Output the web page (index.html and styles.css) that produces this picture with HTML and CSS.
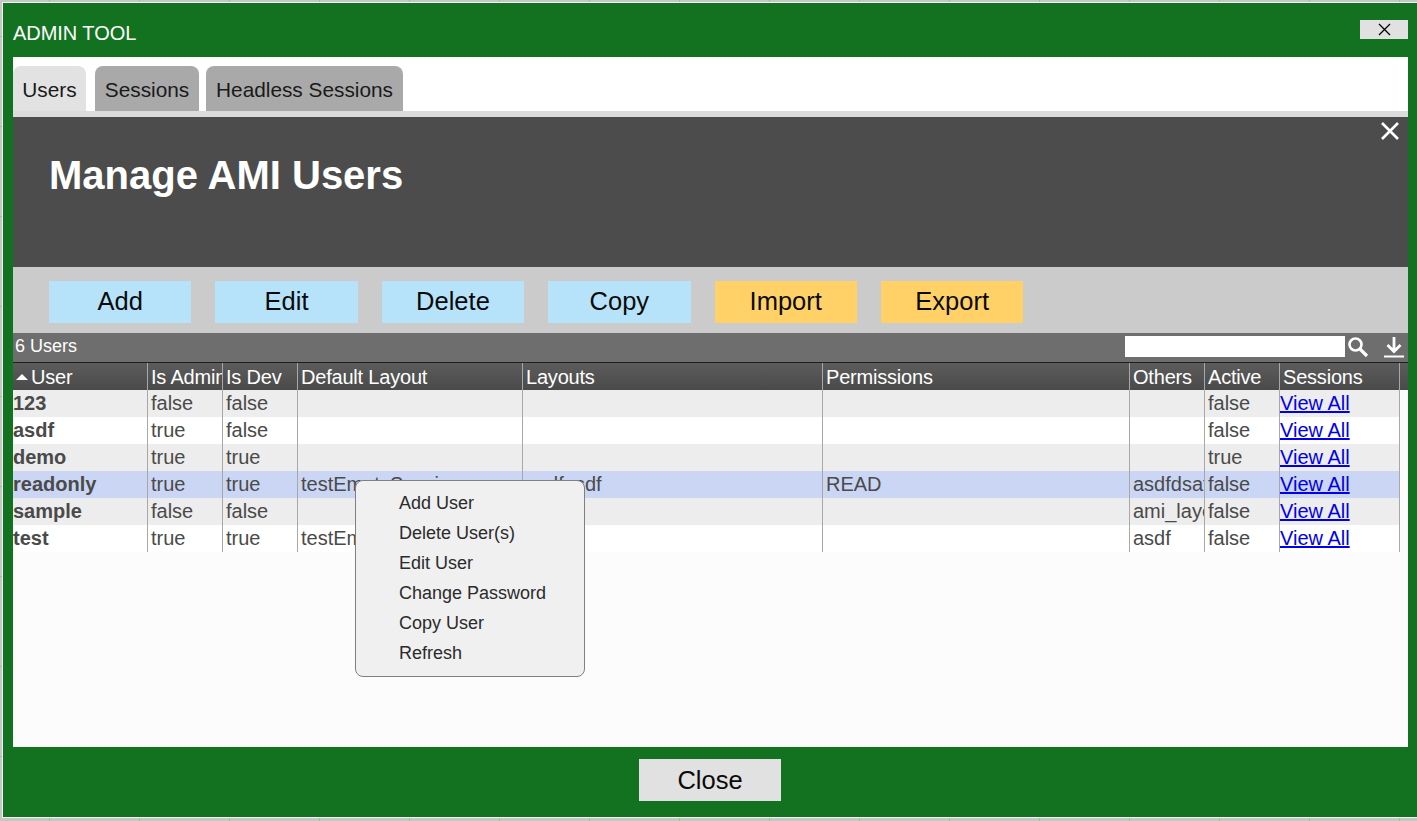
FILE: index.html
```html
<!DOCTYPE html>
<html lang="en">
<head>
<meta charset="utf-8">
<title>Admin Tool</title>
<link rel="stylesheet" href="styles.css">
</head>
<body>
<div class="window">
  <header class="titlebar">
    <span class="title">ADMIN TOOL</span>
    <button class="win-close" aria-label="Close window">
      <svg width="13" height="13" viewBox="0 0 13 13"><path d="M1 1L12 12M12 1L1 12" stroke="#000" stroke-width="1.3" fill="none"/></svg>
    </button>
  </header>
  <div class="content">
    <nav class="tabs">
      <div class="tab tab-active">Users</div>
      <div class="tab">Sessions</div>
      <div class="tab">Headless Sessions</div>
    </nav>
    <div class="tab-rule"></div>
    <section class="banner">
      <h1>Manage AMI Users</h1>
      <svg class="banner-close" width="20" height="20" viewBox="0 0 20 20"><path d="M2 2L18 18M18 2L2 18" stroke="#fff" stroke-width="2.6" fill="none"/></svg>
    </section>
    <div class="toolbar">
      <div class="btn btn-blue">Add</div>
      <div class="btn btn-blue">Edit</div>
      <div class="btn btn-blue">Delete</div>
      <div class="btn btn-blue">Copy</div>
      <div class="btn btn-orange">Import</div>
      <div class="btn btn-orange">Export</div>
    </div>
    <div class="countbar">
      <span class="count">6 Users</span>
      <div class="search"></div>
      <svg class="icon-search" width="22" height="22" viewBox="0 0 22 22"><circle cx="8.500" cy="8.500" r="6" stroke="#fff" stroke-width="2.600" fill="none"/><path d="M13 13L20 20" stroke="#fff" stroke-width="3.200" fill="none"/></svg>
      <svg class="icon-download" width="20" height="22" viewBox="0 0 20 22"><path d="M10 1V15M3.500 9L10 15.500L16.500 9" stroke="#fff" stroke-width="2.800" fill="none"/><path d="M0 20.500H20" stroke="#fff" stroke-width="2" fill="none"/></svg>
    </div>
    <div class="table">
      <div class="row head">
        <div class="cell c1"><span class="sort"></span>User</div>
        <div class="cell c2">Is Admin</div>
        <div class="cell c3">Is Dev</div>
        <div class="cell c4">Default Layout</div>
        <div class="cell c5">Layouts</div>
        <div class="cell c6">Permissions</div>
        <div class="cell c7">Others</div>
        <div class="cell c8">Active</div>
        <div class="cell c9">Sessions</div>
      </div>
      <div class="row odd">
        <div class="cell c1 name">123</div><div class="cell c2">false</div><div class="cell c3">false</div><div class="cell c4"></div><div class="cell c5"></div><div class="cell c6"></div><div class="cell c7"></div><div class="cell c8">false</div><div class="cell c9"><a href="#">View All</a></div>
      </div>
      <div class="row even">
        <div class="cell c1 name">asdf</div><div class="cell c2">true</div><div class="cell c3">false</div><div class="cell c4"></div><div class="cell c5"></div><div class="cell c6"></div><div class="cell c7"></div><div class="cell c8">false</div><div class="cell c9"><a href="#">View All</a></div>
      </div>
      <div class="row odd">
        <div class="cell c1 name">demo</div><div class="cell c2">true</div><div class="cell c3">true</div><div class="cell c4"></div><div class="cell c5"></div><div class="cell c6"></div><div class="cell c7"></div><div class="cell c8">true</div><div class="cell c9"><a href="#">View All</a></div>
      </div>
      <div class="row selected">
        <div class="cell c1 name">readonly</div><div class="cell c2">true</div><div class="cell c3">true</div><div class="cell c4">testEmptySession</div><div class="cell c5">asdfasdf</div><div class="cell c6">READ</div><div class="cell c7">asdfdsaf</div><div class="cell c8">false</div><div class="cell c9"><a href="#">View All</a></div>
      </div>
      <div class="row odd">
        <div class="cell c1 name">sample</div><div class="cell c2">false</div><div class="cell c3">false</div><div class="cell c4"></div><div class="cell c5"></div><div class="cell c6"></div><div class="cell c7">ami_layout</div><div class="cell c8">false</div><div class="cell c9"><a href="#">View All</a></div>
      </div>
      <div class="row even">
        <div class="cell c1 name">test</div><div class="cell c2">true</div><div class="cell c3">true</div><div class="cell c4">testEmptySession</div><div class="cell c5"></div><div class="cell c6"></div><div class="cell c7">asdf</div><div class="cell c8">false</div><div class="cell c9"><a href="#">View All</a></div>
      </div>
      <div class="menu">
        <div class="menu-item">Add User</div>
        <div class="menu-item">Delete User(s)</div>
        <div class="menu-item">Edit User</div>
        <div class="menu-item">Change Password</div>
        <div class="menu-item">Copy User</div>
        <div class="menu-item">Refresh</div>
      </div>
    </div>
  </div>
  <footer class="footer">
    <div class="close-btn">Close</div>
  </footer>
</div>
</body>
</html>
```

FILE: styles.css
```css
* { box-sizing: border-box; }
html, body { height: 100%; }
body {
  margin: 0;
  overflow: hidden;
  font-family: "Liberation Sans", Arial, sans-serif;
  background-color: #c4c7c4;
  background-image:
    linear-gradient(to right, #9cc49c 1px, transparent 1px),
    linear-gradient(to bottom, #9cc49c 1px, transparent 1px);
  background-size: 90px 90px;
  background-position: 49px 36px;
}
.window {
  position: absolute;
  left: 2px;
  top: 2px;
  width: 1416px;
  height: 816px;
  display: flex;
  flex-direction: column;
  background: #12721f;
  border: 1px solid #f2f2f2;
}
.titlebar {
  flex: none;
  height: 54px;
  padding: 0 9px 0 10px;
  display: flex;
  justify-content: space-between;
  align-items: flex-start;
}
.title {
  margin-top: 19px;
  font-size: 20px;
  line-height: 22px;
  color: #fff;
  letter-spacing: -0.05px;
}
.win-close {
  margin-top: 17px;
  width: 48px;
  height: 19px;
  padding: 0;
  border: 0;
  background: #e1e1e1;
  display: flex;
  align-items: center;
  justify-content: center;
}
.content {
  flex: none;
  margin: 0 9px 0 10px;
  height: 690px;
  background: #fcfcfc;
  display: flex;
  flex-direction: column;
  position: relative;
}
.tabs {
  flex: none;
  height: 54px;
  padding-top: 9px;
  display: flex;
  background: #fff;
}
.tab {
  width: 104px;
  height: 45px;
  margin-right: 7px;
  background: #a9a9a9;
  border-radius: 8px 8px 0 0;
  font-size: 20.800px;
  line-height: 47px;
  text-align: center;
  color: #1a1a1a;
}
.tab:nth-child(1) { width: 73px; margin-right: 9px; }
.tab:nth-child(3) { width: 197px; }
.tab-active { background: #e2e2e2; }
.tab-rule { flex: none; height: 6px; background: #dcdcdc; }
.banner {
  flex: none;
  height: 150px;
  background: #4c4c4c;
  position: relative;
  padding: 35px 36px 0;
}
.banner h1 {
  margin: 0;
  font-size: 40px;
  line-height: 46px;
  font-weight: 700;
  color: #fff;
}
.banner-close { position: absolute; top: 4px; right: 8px; }
.toolbar {
  flex: none;
  height: 66px;
  background: #cbcbcb;
  padding: 14px 36px 0;
  display: flex;
  gap: 24px;
}
.btn {
  width: 142.400px;
  height: 42px;
  font-size: 25.500px;
  line-height: 41px;
  text-align: center;
  color: #0a0a0a;
}
.btn-blue { background: #b6e3fa; }
.btn-orange { background: #ffd166; }
.countbar {
  flex: none;
  height: 30px;
  background: #6e6e6e;
  display: flex;
  align-items: center;
  padding: 0 4px 0 2px;
  border-bottom: 1px solid #1e1e1e;
}
.count {
  font-size: 18px;
  color: #fff;
  margin-right: auto;
  margin-top: -3px;
}
.search {
  width: 220px;
  height: 21px;
  background: #fff;
  margin-top: -2px;
}
.icon-search { margin-left: 2px; margin-top: -1px; }
.icon-download { margin-left: 15px; margin-top: -1px; }
.table { flex: 1; position: relative; }
.row {
  display: flex;
  width: 1387px;
  height: 27px;
  font-size: 20px;
  line-height: 27px;
  color: #4a4a4a;
}
.cell {
  padding-left: 3px;
  border-right: 1px solid #a8a8a8;
  overflow: hidden;
  white-space: nowrap;
  flex: none;
}
.c1 { width: 135px; padding-left: 0; }
.c2, .c3, .c8 { width: 75px; }
.c4 { width: 225px; }
.c5 { width: 300px; }
.c6 { width: 307px; }
.c7 { width: 75px; }
.c9 { width: 120px; padding-left: 0; }
.head {
  width: 1395px;
  color: #fff;
  line-height: 29px;
  letter-spacing: -0.2px;
  background: linear-gradient(#5c5c5c, #4a4a4a);
}
.head .c1 { padding-left: 3px; }
.head .c9 { padding-left: 3px; }
.sort {
  display: inline-block;
  width: 0;
  height: 0;
  margin: 0 3px 4px 0;
  border-left: 6px solid transparent;
  border-right: 6px solid transparent;
  border-bottom: 6px solid #fff;
}
.name { font-weight: 700; }
.odd { background: #ededed; }
.even { background: #fff; }
.selected { background: #cbd6f4; }
.cell a { color: #0000ee; text-decoration: underline; }
.menu {
  position: absolute;
  left: 342px;
  top: 117px;
  width: 230px;
  height: 197px;
  padding: 7px 0 0 43px;
  background: #f0f0f0;
  border: 1px solid #808080;
  border-radius: 8px;
}
.menu-item {
  height: 30px;
  font-size: 18px;
  line-height: 30px;
  color: #2b2b2b;
}
.footer {
  flex: 1;
  display: flex;
  justify-content: center;
  padding-top: 12px;
}
.close-btn {
  width: 142px;
  height: 42px;
  background: #e1e1e1;
  font-size: 25.500px;
  line-height: 42px;
  text-align: center;
  color: #0a0a0a;
}
```
